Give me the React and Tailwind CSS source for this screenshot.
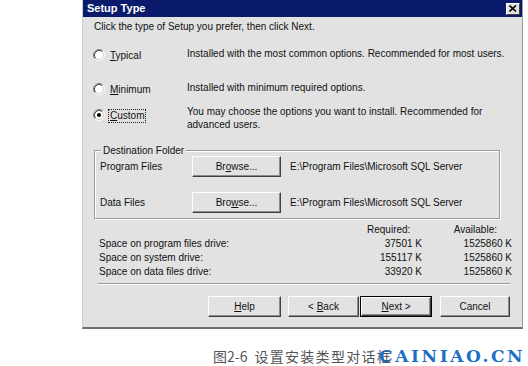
import React from "react";

function Radio({ checked }) {
  return (
    <svg width="12" height="12" viewBox="0 0 12 12" className="shrink-0">
      <circle cx="6" cy="6" r="5" fill="#fff" />
      <path d="M2.11 9.89A5.5 5.5 0 0 1 9.89 2.11" fill="none" stroke="#808080" />
      <path d="M2.82 9.18A4.5 4.5 0 0 1 9.18 2.82" fill="none" stroke="#404040" />
      <path d="M9.89 2.11A5.5 5.5 0 0 1 2.11 9.89" fill="none" stroke="#fff" />
      <path d="M9.18 2.82A4.5 4.5 0 0 1 2.82 9.18" fill="none" stroke="#d4d0c8" />
      {checked && <circle cx="6" cy="6" r="2" fill="#000" />}
    </svg>
  );
}

const btnClass =
  "h-[21px] flex items-center justify-center bg-[#e2e2e2] border border-t-white border-l-white border-r-[#404040] border-b-[#404040] shadow-[inset_-1px_-1px_0_#8c8c8c] text-[10px] text-[#111]";

function U({ children }) {
  return <span className="underline underline-offset-[1px]">{children}</span>;
}

export default function App() {
  const rows = [
    ["Space on program files drive:", "37501 K", "1525860 K"],
    ["Space on system drive:", "155117 K", "1525860 K"],
    ["Space on data files drive:", "33920 K", "1525860 K"],
  ];

  return (
    <div className="w-[528px] h-[366px] bg-white overflow-hidden font-['Liberation_Sans',Arial,sans-serif] text-[#111]">
      {/* Dialog */}
      <div className="ml-[82px] w-[441px] h-[329px] bg-[#e2e2e2] border-l border-l-[#cfcfcf] border-r border-r-[#9a9a9a] border-b-2 border-b-[#6e6e6e] flex flex-col">
        {/* Title bar */}
        <div className="h-[17px] bg-[#0b1b6c] flex items-center justify-between pl-[4px] pr-[2px]">
          <span className="text-white font-bold text-[11px] leading-none">Setup Type</span>
          <div className="w-[14px] h-[12px] bg-[#e2e2e2] border border-t-white border-l-white border-r-[#404040] border-b-[#404040] flex items-center justify-center">
            <svg width="8" height="7" viewBox="0 0 8 7">
              <path d="M0.5 0.5L7 6.5M7 0.5L0.5 6.5" stroke="#000" strokeWidth="1.6" />
            </svg>
          </div>
        </div>

        {/* Instruction */}
        <div className="h-[20px] leading-[20px] pl-[11px] text-[10px]">
          Click the type of Setup you prefer, then click Next.
        </div>

        {/* Options */}
        <div className="mt-[11px] h-[14px] flex items-center pl-[10px] text-[10px]">
          <Radio />
          <span className="ml-[5px] w-[77px]">
            <U>T</U>ypical
          </span>
          <span className="-mt-[3px]">Installed with the most common options. Recommended for most users.</span>
        </div>

        <div className="mt-[20px] h-[14px] flex items-center pl-[10px] text-[10px]">
          <Radio />
          <span className="ml-[5px] w-[77px]">
            <U>M</U>inimum
          </span>
          <span className="-mt-[3px]">Installed with minimum required options.</span>
        </div>

        <div className="mt-[12px] h-[24px] flex items-start pl-[10px] text-[10px]">
          <div className="h-[14px] flex items-center">
            <Radio checked />
            <span className="ml-[3px] w-[79px]">
              <span className="border border-dotted border-[#222] px-[1px] leading-[12px] inline-block">
                <U>C</U>ustom
              </span>
            </span>
          </div>
          <div className="-mt-[3px] leading-[13px]">
            You may choose the options you want to install. Recommended for
            <br />
            advanced users.
          </div>
        </div>

        {/* Destination Folder group */}
        <div className="relative mt-[18px] ml-[11px] w-[406px] h-[69px] border border-[#9a9a9a] shadow-[inset_1px_1px_0_#fff,1px_1px_0_#fff] text-[10px] pt-[5px] pl-[5px]">
          <span className="absolute -top-[7px] left-[6px] bg-[#e2e2e2] px-[2px] leading-[13px]">
            Destination Folder
          </span>
          <div className="flex items-center">
            <span className="w-[92px]">Program Files</span>
            <div className={btnClass + " w-[89px]"}>
              <span>
                Br<U>o</U>wse...
              </span>
            </div>
            <span className="ml-[9px]">E:\Program Files\Microsoft SQL Server</span>
          </div>
          <div className="flex items-center mt-[15px]">
            <span className="w-[92px]">Data Files</span>
            <div className={btnClass + " w-[89px]"}>
              <span>
                Bro<U>w</U>se...
              </span>
            </div>
            <span className="ml-[9px]">E:\Program Files\Microsoft SQL Server</span>
          </div>
        </div>

        {/* Disk space */}
        <div className="mt-[4px] pl-[16px] pr-[10px] text-[10px] leading-[14px]">
          <div className="flex">
            <span className="ml-[268px]">Required:</span>
            <span className="ml-auto mr-[15px]">Available:</span>
          </div>
          {rows.map(([label, req, avail]) => (
            <div key={label} className="grid grid-cols-[1fr_80px_90px]">
              <span>{label}</span>
              <span className="text-right">{req}</span>
              <span className="text-right">{avail}</span>
            </div>
          ))}
        </div>

        <div className="mt-[4px] ml-[15px] mr-[12px] border-t border-t-[#9a9a9a] border-b border-b-white" />

        {/* Buttons */}
        <div className="mt-[11px] flex">
          <div className={btnClass + " w-[73px] ml-[125px]"}>
            <span>
              <U>H</U>elp
            </span>
          </div>
          <div className={btnClass + " w-[71px] ml-[7px]"}>
            <span>
              &lt; <U>B</U>ack
            </span>
          </div>
          <div className="w-[72px] h-[21px] ml-[1px] border border-black">
            <div className={btnClass + " w-full h-full"}>
              <span>
                <U>N</U>ext &gt;
              </span>
            </div>
          </div>
          <div className={btnClass + " w-[70px] ml-[8px]"}>
            <span>Cancel</span>
          </div>
        </div>
      </div>

      {/* Caption */}
      <div className="mt-[18px] ml-[213px] flex items-center h-[18px] whitespace-nowrap text-[14px] text-[#555] font-['Noto_Sans_CJK_SC',sans-serif] leading-none">
        <span className="shrink-0">图2-6</span>
        <span className="shrink-0 ml-[7px] tracking-[1.3px]">设置安装类型对话框</span>
        <span className="shrink-0 -ml-[13px] text-[17px] font-black tracking-[2.6px] text-[#1d6fc4] font-['DejaVu_Serif',serif]">
          CAINIAO.CN
        </span>
      </div>
    </div>
  );
}
